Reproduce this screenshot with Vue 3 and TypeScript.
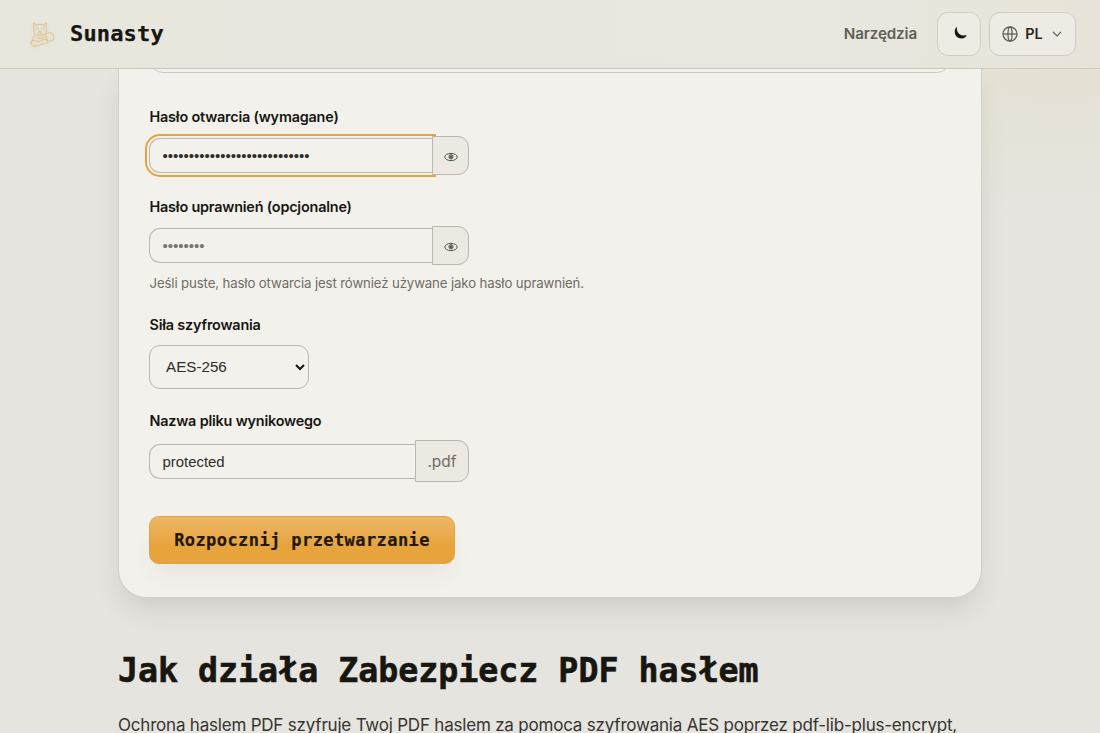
<script setup lang="ts">
import { ref } from 'vue'

const openPassword = ref('•'.repeat(28))
const permissionPassword = ref('')
const strength = ref('AES-256')
const fileName = ref('protected')
</script>

<template>
  <div class="page">
    <header class="topbar">
      <a class="brand">
        <svg class="cat" viewBox="0 0 28 30" fill="none" stroke="#e9bd80" stroke-width=".9" stroke-linejoin="round" stroke-linecap="round">
          <path d="M6 10 5.500 3.500 9 6q3-1 6 0l3.500-2.500L18 10q1.500 4-2 5.500l-4 1-4-1Q4.500 14 6 10Z" />
          <path d="M7 6.500l1.500 1M17 6.500l-1.500 1M8.500 10h1.500M14 10h1.500M11.300 12h1.400l-.7 1ZM10 14l2 .8 2-.8" />
          <path d="M7 15.500q-3 3-2.500 7M17 15.500q2 2 2 5M8 18q4 3 8 0" />
          <path d="M18.500 15q3-3 6-.5 2.500 3 .5 6.500-3 2-6 1M3 23.500q0-3 2.500-2L11 22.500q5-3.500 8.500-1.500 1.500 3-2 3.500-6 1-11 3Q3 28 3 23.500ZM6 25l1 1.500" />
        </svg>
        <span class="brand-name">Sunasty</span>
      </a>
      <nav class="nav">
        <a class="nav-link">Narzędzia</a>
        <button class="chip theme" aria-label="Motyw">
          <svg width="14" height="14" viewBox="0 0 14 14"><path d="M3 .8Q2.200 5.200 5.300 8 8.300 10.300 12.700 9.100 11.300 12.300 8 12.600 4.500 12.800 2.400 10.500.4 8 .7 5 1 2.200 3 .8Z" fill="#171611" /></svg>
        </button>
        <button class="chip lang">
          <svg class="globe" width="16" height="16" viewBox="0 0 16 16" fill="none" stroke="#625f55" stroke-width="1.300"><circle cx="8" cy="8" r="7" /><ellipse cx="8" cy="8" rx="2" ry="7" /><path d="M1 8h14" /></svg>
          <span>PL</span>
          <svg class="chev" width="10" height="6" viewBox="0 0 10 6" fill="none" stroke="#625f55" stroke-width="1.200"><path d="m1 .8 4 4 4-4" /></svg>
        </button>
      </nav>
    </header>

    <main class="content">
      <section class="card">
        <div class="dropzone"></div>
        <form class="form" @submit.prevent>
          <label class="label">Hasło otwarcia (wymagane)</label>
          <div class="group">
            <input v-model="openPassword" class="field focused dots" type="text" />
            <button type="button" class="addon eye" aria-label="Pokaż hasło">
              <svg width="14" height="10" viewBox="0 0 14 10" fill="none" stroke="#55524a"><ellipse cx="7" cy="5" rx="6.200" ry="3.600" /><circle cx="7" cy="4.800" r="2.100" /><circle cx="7" cy="4.800" r="1.100" fill="#55524a" /></svg>
            </button>
          </div>

          <label class="label second">Hasło uprawnień (opcjonalne)</label>
          <div class="group">
            <input v-model="permissionPassword" class="field dots" type="text" placeholder="••••••••" />
            <button type="button" class="addon eye" aria-label="Pokaż hasło">
              <svg width="14" height="10" viewBox="0 0 14 10" fill="none" stroke="#55524a"><ellipse cx="7" cy="5" rx="6.200" ry="3.600" /><circle cx="7" cy="4.800" r="2.100" /><circle cx="7" cy="4.800" r="1.100" fill="#55524a" /></svg>
            </button>
          </div>
          <p class="hint">Jeśli puste, hasło otwarcia jest również używane jako hasło uprawnień.</p>

          <label class="label third">Siła szyfrowania</label>
          <div class="select">
            <span>{{ strength }}</span>
            <svg width="10" height="7" viewBox="0 0 10 7" fill="none" stroke="#171611" stroke-width="2"><path d="m1 1 4 4 4-4" /></svg>
          </div>

          <label class="label fourth">Nazwa pliku wynikowego</label>
          <div class="group file">
            <input v-model="fileName" class="field" type="text" />
            <span class="addon suffix">.pdf</span>
          </div>

          <button class="submit" type="button"><span>Rozpocznij przetwarzanie</span></button>
        </form>
      </section>

      <h2 class="title">Jak działa Zabezpiecz PDF hasłem</h2>
      <p class="text">Ochrona haslem PDF szyfruje Twoj PDF haslem za pomoca szyfrowania AES poprzez pdf-lib-plus-encrypt,</p>
    </main>
  </div>
</template>

<style>
body { margin: 0; overflow: hidden; }
</style>

<style scoped>
* { box-sizing: border-box; }
.page {
  height: 733px;
  overflow: hidden;
  color: #171611;
  font-family: Inter, "Liberation Sans", sans-serif;
  background:
    radial-gradient(ellipse 260px 200px at 1060px 20px, rgba(232, 205, 145, .2), rgba(232, 215, 175, .14) 55%, transparent 100%),
    #e5e4df;
}
.topbar {
  height: 69px;
  display: flex;
  align-items: center;
  justify-content: space-between;
  padding: 0 24px 1px 28px;
  border-bottom: 1px solid #cbcac3;
  background: linear-gradient(90deg, #e7e7de 0%, #e8e7e0 75%, #e8e3d8 100%);
}
.brand { display: flex; align-items: center; gap: 14px; }
.cat { width: 28px; height: 30px; filter: drop-shadow(0 1px 2px rgba(80, 70, 40, .12)); }
.brand-name {
  font: 700 22px/30px "DejaVu Sans Mono", monospace;
  letter-spacing: .16px;
  -webkit-text-stroke: .25px currentColor;
}
.nav { display: flex; align-items: center; }
.nav-link { font-size: 15.200px; font-weight: 600; letter-spacing: -.13px; color: #625f55; margin-right: 20px; }
.chip {
  height: 44px;
  border: 1px solid #cfcdc5;
  border-radius: 11px;
  background: #eeebe4;
  display: flex;
  align-items: center;
  justify-content: center;
  padding: 0;
  color: #27251f;
  font: 600 14.400px Inter, sans-serif;
}
.theme { width: 44px; margin-right: 8px; }
.theme svg { margin: -2px 0 0 3px; }
.lang { width: 87px; }
.lang span { margin: 0 9px 0 7px; }
.globe { margin-left: -1px; }
.content { width: 863px; margin: 0 0 0 118px; }
.card {
  width: 864px;
  height: 529px;
  padding: 0 30px;
  overflow: hidden;
  border: 1px solid #d0cfc8;
  border-top: 0;
  border-radius: 0 0 28px 28px;
  background: #f2f1ec;
  box-shadow: 0 14px 28px -7px rgba(60, 58, 43, .17);
}
.dropzone {
  height: 44px;
  margin-top: -40px;
  border: 1px solid #cbcac4;
  border-radius: 14px;
}
.form { padding-top: 34px; }
.label { display: block; font-size: 14.400px; line-height: 20px; font-weight: 600; letter-spacing: -.19px; padding-left: .5px; }
.group { display: flex; width: 320px; height: 39px; align-items: center; margin-top: 9px; }
.field {
  flex: 1;
  min-width: 0;
  height: 35px;
  border: 1px solid #b9b7af;
  border-right: 0;
  border-radius: 11px 0 0 11px;
  padding: 1px 12.500px 0;
  color: #302e29;
  background: transparent;
  outline: 0;
  font: 14.900px "Liberation Sans", sans-serif;
}
.dots { font: 15px/20px "Liberation Sans", sans-serif; padding-top: 0; }
.dots::placeholder { color: #77756f; opacity: 1; }
.focused { outline: 2px solid #e5a340; outline-offset: 2px; }
.addon {
  height: 39px;
  border: 1px solid #b9b7af;
  border-radius: 0 11px 11px 0;
  background: #ece9e3;
  display: flex;
  align-items: center;
  justify-content: center;
  padding: 0;
  position: relative;
}
.eye { width: 37px; }
.eye svg { margin-top: 2px; }
.second { margin-top: 22px; }
.hint { margin: 8px 0 0; padding-left: .5px; font-size: 13.200px; line-height: 20px; letter-spacing: -.115px; color: #706d64; }
.third { margin-top: 22px; }
.select {
  width: 160px;
  height: 44px;
  margin-top: 10px;
  border: 1px solid #b9b7af;
  border-radius: 11px;
  padding: 0 3px 1px 16px;
  display: flex;
  align-items: center;
  justify-content: space-between;
  color: #302e29;
  font: 15.200px "Liberation Sans", sans-serif;
}
.select svg { margin-top: 2px; }
.fourth { margin-top: 22px; }
.file { height: 42px; }
.suffix { width: 54px; height: 42px; font-size: 15.500px; color: #706d64; }
.submit {
  width: 306px;
  height: 48px;
  margin-top: 34px;
  border: 1px solid #e1a246;
  border-radius: 10px;
  padding: 0;
  color: #211908;
  background: linear-gradient(#edb765, #e7a33c 65%, #e7a33c);
  box-shadow: 0 14px 24px -8px rgba(70, 65, 45, .09);
  font: 700 17px/24px "DejaVu Sans Mono", monospace;
  letter-spacing: .42px;
  -webkit-text-stroke: .2px currentColor;
}
.title {
  margin: 51px 0 0;
  font: 700 33.300px/44px "DejaVu Sans Mono", monospace;
  letter-spacing: -.03px;
  -webkit-text-stroke: .6px currentColor;
  white-space: nowrap;
}
.text { margin: 18px 0 0; font-size: 17px; line-height: 28px; letter-spacing: -.205px; color: #36342f; white-space: nowrap; }
</style>
